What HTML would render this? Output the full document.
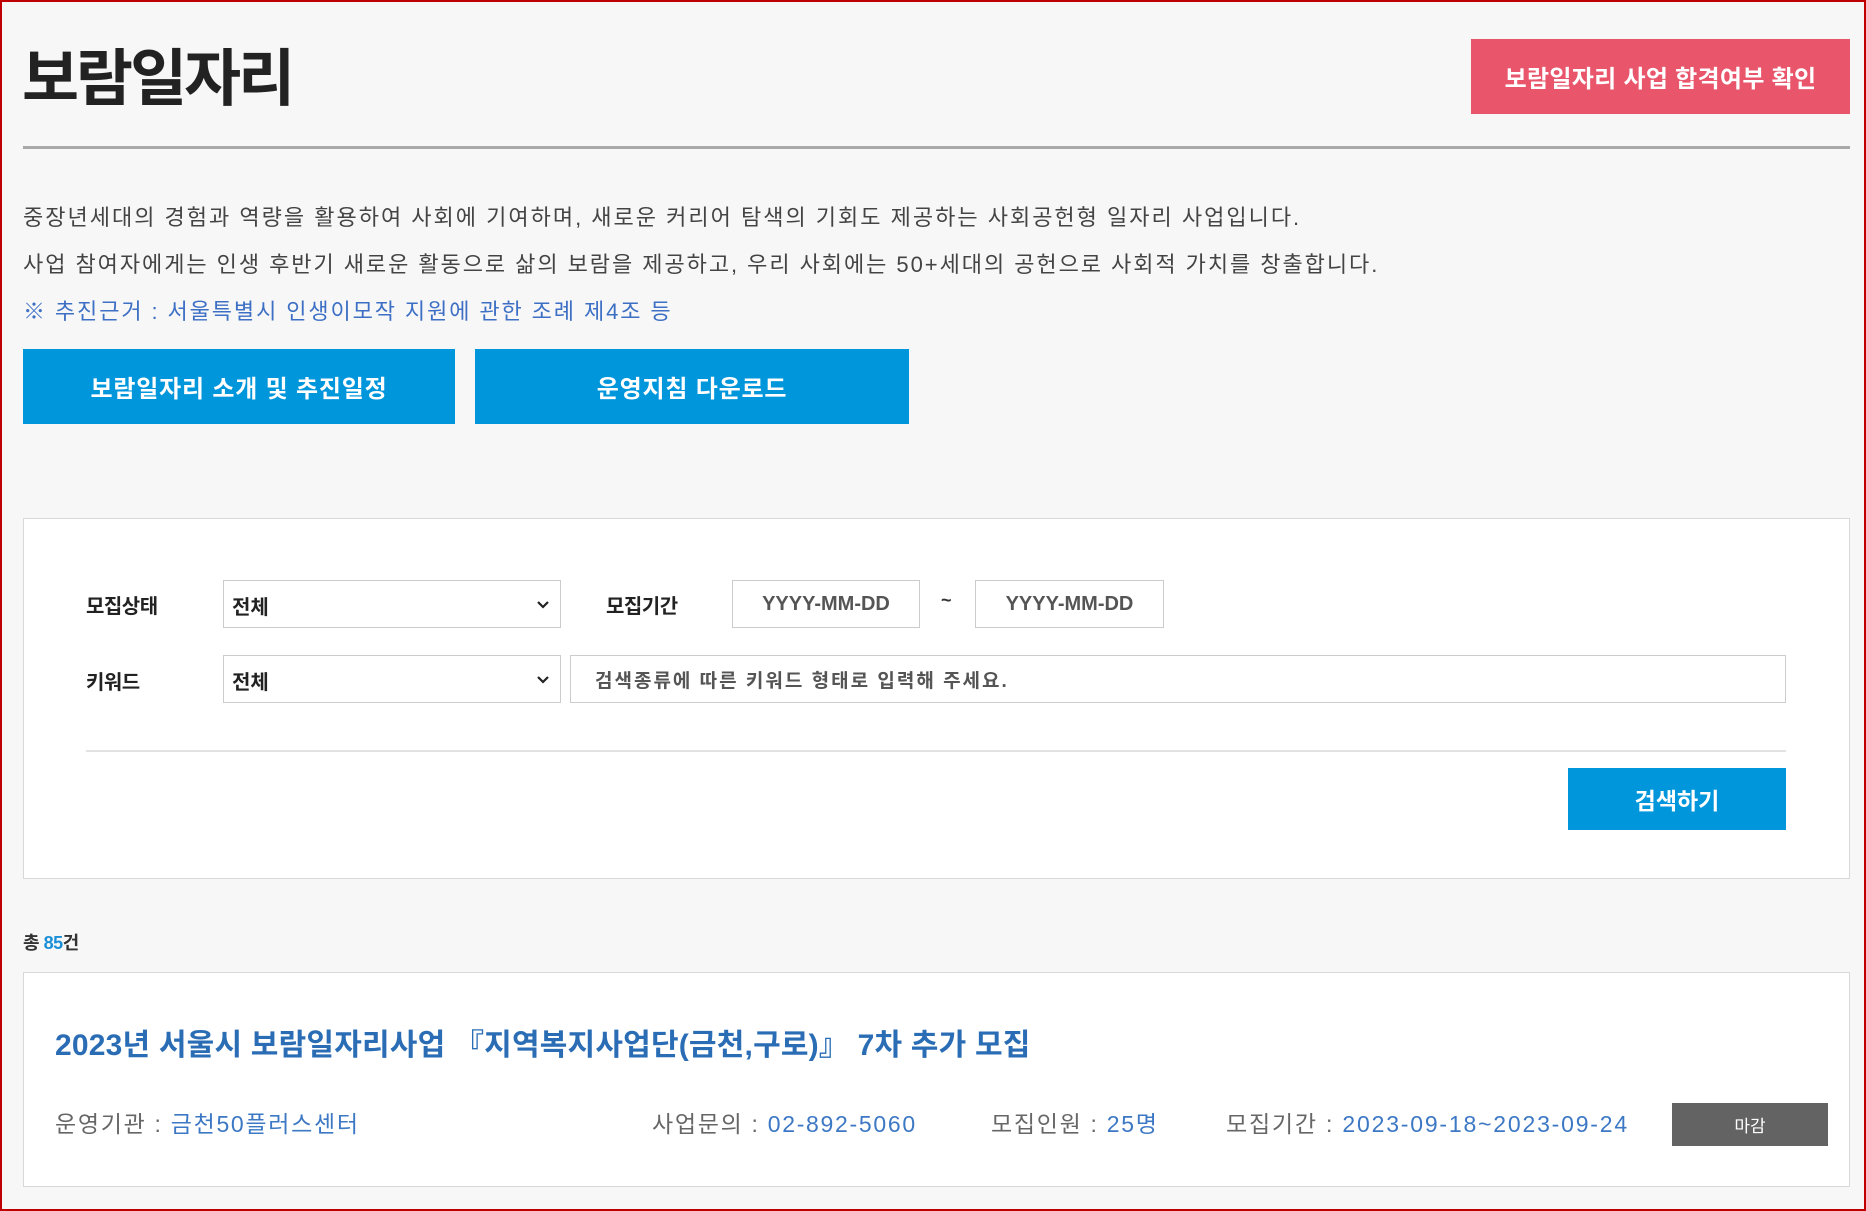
<!DOCTYPE html>
<html><head><meta charset="utf-8"><style>
*{margin:0;padding:0;box-sizing:border-box}
body{width:1866px;height:1211px;background:#f7f7f7;font-family:"Liberation Sans","Noto Sans CJK KR",sans-serif;position:relative;overflow:hidden;color:#333}
.frame{position:absolute;left:0;top:0;width:1866px;height:1211px;border:2px solid #c00000;pointer-events:none;z-index:10}
.a{position:absolute;white-space:nowrap}
.btn{position:absolute;display:flex;align-items:center;justify-content:center;color:#fff;font-weight:bold}
.lbl{position:absolute;font-size:20px;font-weight:bold;color:#222;letter-spacing:-0.5px}
.box{position:absolute;background:#fff;border:1px solid #d8d8d8}
</style></head><body>
<div class="frame"></div>
<div class="a" style="left:22px;top:40px;font-size:62px;font-weight:bold;color:#222;letter-spacing:-3px;line-height:80px">보람일자리</div>
<div class="btn" style="left:1471px;top:39px;width:379px;height:75px;background:#e9556a;font-size:24px;letter-spacing:0.3px">보람일자리 사업 합격여부 확인</div>
<div style="position:absolute;left:23px;top:146px;width:1827px;height:3px;background:#a9a9a9"></div>
<div class="a" style="left:23px;top:203px;font-size:22px;color:#444;letter-spacing:2.0px;line-height:30px">중장년세대의 경험과 역량을 활용하여 사회에 기여하며, 새로운 커리어 탐색의 기회도 제공하는 사회공헌형 일자리 사업입니다.</div>
<div class="a" style="left:23px;top:250px;font-size:22px;color:#444;letter-spacing:1.95px;line-height:30px">사업 참여자에게는 인생 후반기 새로운 활동으로 삶의 보람을 제공하고, 우리 사회에는 50+세대의 공헌으로 사회적 가치를 창출합니다.</div>
<div class="a" style="left:23px;top:297px;font-size:22px;color:#3d6fc4;letter-spacing:1.9px;line-height:30px">※ 추진근거 : 서울특별시 인생이모작 지원에 관한 조례 제4조 등</div>
<div class="btn" style="left:23px;top:349px;width:432px;height:75px;background:#0096dc;font-size:24px;letter-spacing:0.8px">보람일자리 소개 및 추진일정</div>
<div class="btn" style="left:475px;top:349px;width:434px;height:75px;background:#0096dc;font-size:24px;letter-spacing:0.8px">운영지침 다운로드</div>

<div class="box" style="left:23px;top:518px;width:1827px;height:361px"></div>
<div class="lbl" style="left:86px;top:590px">모집상태</div>
<div class="box" style="left:223px;top:580px;width:338px;height:48px;border-color:#ccc"><span class="a" style="left:8px;top:10px;font-size:20px;font-weight:bold;color:#222">전체</span><svg class="a" style="left:313px;top:20px" width="12" height="8" viewBox="0 0 12 8"><path d="M1 1l5 5 5-5" stroke="#222" stroke-width="2.2" fill="none"/></svg></div>
<div class="lbl" style="left:606px;top:590px">모집기간</div>
<div class="box" style="left:732px;top:580px;width:188px;height:48px;border-color:#ccc;display:flex;align-items:center;justify-content:center;font-size:20px;color:#555;font-weight:bold">YYYY-MM-DD</div>
<div class="a" style="left:941px;top:590px;font-size:18px;color:#333;font-weight:bold">~</div>
<div class="box" style="left:975px;top:580px;width:189px;height:48px;border-color:#ccc;display:flex;align-items:center;justify-content:center;font-size:20px;color:#555;font-weight:bold">YYYY-MM-DD</div>

<div class="lbl" style="left:86px;top:666px">키워드</div>
<div class="box" style="left:223px;top:655px;width:338px;height:48px;border-color:#ccc"><span class="a" style="left:8px;top:10px;font-size:20px;font-weight:bold;color:#222">전체</span><svg class="a" style="left:313px;top:20px" width="12" height="8" viewBox="0 0 12 8"><path d="M1 1l5 5 5-5" stroke="#222" stroke-width="2.2" fill="none"/></svg></div>
<div class="box" style="left:570px;top:655px;width:1216px;height:48px;border-color:#ccc"><span class="a" style="left:24px;top:10px;font-size:19px;color:#555;font-weight:bold;letter-spacing:2px">검색종류에 따른 키워드 형태로 입력해 주세요.</span></div>
<div style="position:absolute;left:86px;top:750px;width:1700px;height:2px;background:#e2e2e2"></div>
<div class="btn" style="left:1568px;top:768px;width:218px;height:62px;background:#0096dc;font-size:23px">검색하기</div>

<div class="a" style="left:23px;top:929px;font-size:18px;font-weight:bold;color:#333;letter-spacing:-0.5px">총 <span style="color:#1a8fd8">85</span>건</div>

<div class="box" style="left:23px;top:972px;width:1827px;height:215px"></div>
<div class="a" style="left:55px;top:1020px;font-size:30px;font-weight:bold;color:#2a6db5;letter-spacing:0.2px">2023년 서울시 보람일자리사업 『지역복지사업단(금천,구로)』 7차 추가 모집</div>
<div class="a" style="left:55px;top:1105px;font-size:23px;color:#666;letter-spacing:1.7px">운영기관 : <span style="color:#3d78c4">금천50플러스센터</span></div>
<div class="a" style="left:652px;top:1105px;font-size:23px;color:#666;letter-spacing:1.7px">사업문의 : <span style="color:#3d78c4">02-892-5060</span></div>
<div class="a" style="left:991px;top:1105px;font-size:23px;color:#666;letter-spacing:1.7px">모집인원 : <span style="color:#3d78c4">25명</span></div>
<div class="a" style="left:1226px;top:1105px;font-size:23px;color:#666;letter-spacing:1.8px">모집기간 : <span style="color:#3d78c4">2023-09-18~2023-09-24</span></div>
<div class="btn" style="left:1672px;top:1103px;width:156px;height:43px;background:#636363;font-size:17px;font-weight:normal">마감</div>
</body></html>
